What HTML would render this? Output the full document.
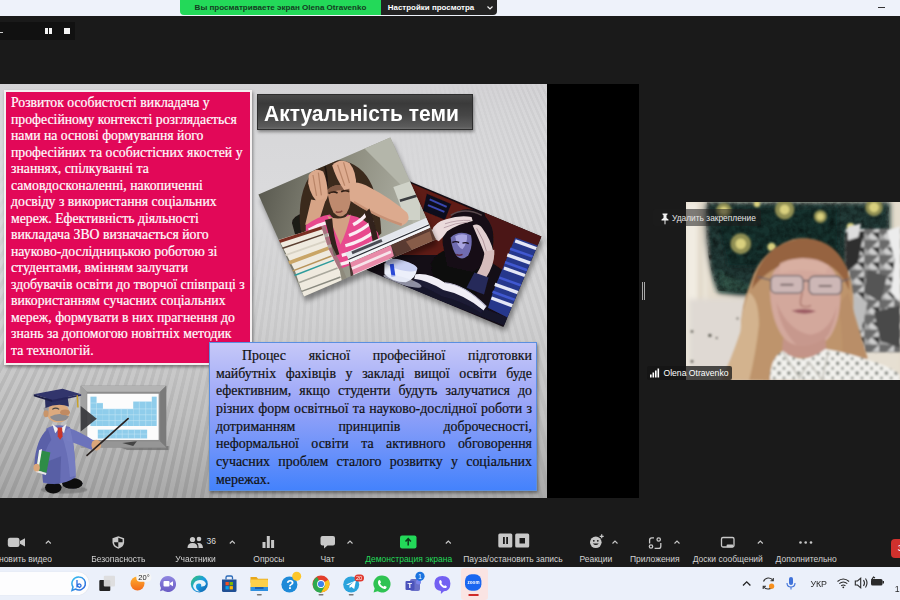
<!DOCTYPE html>
<html lang="uk"><head><meta charset="utf-8"><title>Zoom</title>
<style>
*{box-sizing:border-box;margin:0;padding:0}
html,body{width:900px;height:600px;overflow:hidden;background:#1a1a1a}
body{position:relative;font-family:"Liberation Sans",sans-serif}
.abs{position:absolute}
#topstrip{left:0;top:0;width:900px;height:16px;background:#eef2fa}
#banner{left:180px;top:0;width:201px;height:15px;background:#23d959;border-radius:0 0 0 4px;color:#143d22;font-weight:bold;font-size:8.050px;line-height:15.500px;text-align:center;white-space:nowrap}
#opts{left:381px;top:0;width:116px;height:15px;background:#222;border-radius:0 0 4px 0;color:#fff;font-weight:bold;font-size:7.950px;line-height:15.500px;padding-left:6.800px;white-space:nowrap}
#slide{left:0;top:84px;width:547px;height:414px;background:linear-gradient(180deg,#d4d3d6 0%,#d7d7d9 8%,#dadadc 25%,#d2d2d3 55%,#c2c2c2 80%,#a9a9a9 100%);overflow:hidden}
#swrap{left:0;top:0;width:547px;height:414px;-webkit-mask-image:linear-gradient(177deg,transparent 0,transparent 22px,#000 34px);mask-image:linear-gradient(177deg,transparent 0,transparent 22px,#000 34px)}
#stripes,#stripes2{left:0;top:0;width:547px;height:414px;background:repeating-conic-gradient(from 90deg at 349px -399px,rgba(0,0,0,0) 0deg .28deg,rgba(0,0,0,.035) .34deg .56deg,rgba(0,0,0,0) .62deg);-webkit-mask-image:radial-gradient(ellipse 330px 190px at 200px 30px,transparent 0,transparent 55%,#000 100%);mask-image:radial-gradient(ellipse 330px 190px at 200px 30px,transparent 0,transparent 55%,#000 100%)}
#stripes2{background:repeating-conic-gradient(from 90deg at 349px -399px,rgba(0,0,0,0) 0deg .28deg,rgba(0,0,0,.06) .34deg .56deg,rgba(0,0,0,0) .62deg);-webkit-mask-image:radial-gradient(ellipse 300px 170px at 40px 400px,#000 0,#000 45%,transparent 100%);mask-image:radial-gradient(ellipse 300px 170px at 40px 400px,#000 0,#000 45%,transparent 100%)}
#black{left:547px;top:84px;width:92px;height:414px;background:#000}
#pink{left:4px;top:90px;width:248px;height:275px;background:#e20858;border:2px solid #f4f0f0;color:#fff;font-family:"Liberation Serif",serif;font-size:13.75px;line-height:16.5px;padding:3px 0 0 5px;white-space:nowrap;-webkit-text-stroke:.2px #fff;box-shadow:1px 2px 3px rgba(0,0,0,.4)}
#title{left:257px;top:94px;width:216px;height:36px;background:linear-gradient(180deg,#484848 0%,#3a3a3a 25%,#464646 60%,#5c5c5c 94%,#6e6e6e 100%);border:1px solid #2e2e2e;color:#fff;font-weight:bold;font-size:22.300px;line-height:37px;padding-left:6.300px;white-space:nowrap;box-shadow:1px 2px 3px rgba(0,0,0,.4)}
#title span{display:inline-block;transform:scaleX(.94);transform-origin:0 50%}
#blue{left:209px;top:342px;width:328px;height:149px;background:linear-gradient(180deg,#c6c8f8 0%,#98a4f8 42%,#4482fc 100%);border:1px solid #5b8fe0;font-family:"Liberation Serif",serif;font-size:13.9px;line-height:17.65px;color:#111;padding:4px 0 0 6px;-webkit-text-stroke:.2px #111;box-shadow:1px 2px 3px rgba(0,0,0,.4)}
#blue p{width:316px;text-align:justify;text-align-last:justify;white-space:nowrap}
#blue p.last{text-align-last:left}
#toolbar{left:0;top:498px;width:900px;height:69px;background:#1a1a1a}
#taskbar{left:0;top:566.500px;width:900px;height:33.500px;background:#ebf0fa}
.tl{position:absolute;top:553.700px;font-size:8.5px;line-height:11px;color:#d2d2d2;white-space:nowrap;transform:translateX(-50%)}
</style></head><body>
<div id="topstrip" class="abs"></div>
<div id="banner" class="abs">Вы просматриваете экран Olena Otravenko</div>
<div id="opts" class="abs">Настройки просмотра</div>
<svg class="abs" style="left:486px;top:5px" width="8" height="6" viewBox="0 0 8 6"><path d="M1.500,1.500 l2.500,2.500 2.500,-2.500" stroke="#eee" stroke-width="1.200" fill="none"/></svg>
<div id="slide" class="abs"><div id="swrap" class="abs"><div id="stripes" class="abs"></div><div id="stripes2" class="abs"></div></div></div>
<div id="black" class="abs"></div>
<!--SLIDEGFX-->
<svg id="gfx" class="abs" style="left:0;top:84px" width="547" height="414" viewBox="0 84 547 414">
<defs>
<filter id="z1" x="-10%" y="-10%" width="120%" height="120%"><feGaussianBlur stdDeviation="2.2"/></filter>
<filter id="z0" x="-10%" y="-10%" width="120%" height="120%"><feGaussianBlur stdDeviation="1.3"/></filter>
<filter id="b1" x="-20%" y="-20%" width="140%" height="140%"><feGaussianBlur stdDeviation="1.2"/></filter>
<filter id="b2" x="-20%" y="-20%" width="140%" height="140%"><feGaussianBlur stdDeviation="2.5"/></filter>
<filter id="b3" x="-30%" y="-30%" width="160%" height="160%"><feGaussianBlur stdDeviation="4"/></filter>
<clipPath id="cp1"><polygon points="258.4,194.5 390.3,137.5 435.9,239.4 304,296.4"/></clipPath>
<clipPath id="cp2"><polygon points="403,178.500 541.400,236.400 503.400,327.100 365,269.200"/></clipPath>
<linearGradient id="p1bg" x1="258" y1="194" x2="436" y2="239" gradientUnits="userSpaceOnUse"><stop offset="0" stop-color="#5a5a50"/><stop offset=".45" stop-color="#8e8e80"/><stop offset="1" stop-color="#b9bbb0"/></linearGradient>
</defs>
<!-- photo 2 (dark) -->
<polygon points="405,182.500 543.400,240.400 505.400,331.100 367,273.200" fill="#000" opacity=".4" filter="url(#b2)"/>
<g clip-path="url(#cp2)">
<rect x="360" y="170" width="200" height="170" fill="#140e16"/>
<g transform="translate(360,170) scale(.2832)" filter="url(#z1)">
<polygon points="140,30 400,140 300,300 60,300" fill="#5e1a12"/>
<polygon points="440,150 660,240 600,420 470,330" fill="#4c1712"/>
<polygon points="236,84 322,120 300,176 222,144" fill="#10101c"/>
<path d="M246,104 l60,26 M240,124 l58,24" stroke="#3a46b0" stroke-width="7"/>
<!-- body -->
<path d="M250,330 q30,-60 100,-50 q60,10 80,80 l-20,80 -150,-40z" fill="#0e0a10"/>
<!-- hair -->
<path d="M292,260 q-6,-90 70,-120 q80,-10 106,70 q10,60 -10,110 l-60,40 -90,-20z" fill="#161014"/>
<path d="M320,160 q50,-30 110,0" stroke="#5a4a50" stroke-width="5" fill="none"/>
<!-- face -->
<path d="M320,238 q30,-28 72,-8 q8,38 -10,72 q-20,18 -38,4 q-20,-24 -24,-68z" fill="#6f6cb0"/>
<path d="M336,234 q18,-12 42,-4 q2,26 -16,50 q-20,-8 -26,-46z" fill="#aaa6e2"/>
<path d="M326,256 q12,-6 24,0 M362,258 q12,-4 22,2" stroke="#1a1020" stroke-width="5" fill="none"/>
<path d="M340,298 q10,6 22,0" stroke="#5a2a40" stroke-width="5" fill="none"/>
<path d="M318,236 q30,-34 78,-10 l-4,-26 -60,-6z" fill="#161014"/>
<!-- left hand -->
<path d="M254,214 q10,-30 50,-40 q50,-16 90,-8 l4,14 q-50,10 -90,36 q-16,24 -30,36 q-20,-10 -24,-38z" fill="#eadadc"/>
<path d="M300,190 q40,-14 90,-12 M296,204 q40,-18 86,-20" stroke="#b49aa4" stroke-width="3" fill="none"/>
<!-- right hand & arm -->
<path d="M398,196 q20,-10 34,10 q30,40 40,86 l-30,8 q-20,-50 -44,-104z" fill="#e2cfd0"/>
<path d="M412,206 q26,40 36,86" stroke="#a88c94" stroke-width="3" fill="none"/>
<path d="M440,288 l34,-6 q4,50 -30,100 l-34,-12 q26,-40 30,-82z" fill="#d6bcbc"/>
<path d="M404,362 l50,18 -16,60 -62,-24z" fill="#262a5a"/>
<!-- table -->
<polygon points="30,365 200,400 520,520 525,555" fill="#15132a"/>
<!-- book -->
<path d="M196,368 q50,-6 104,30 q70,6 146,84 l-10,14 q-70,-50 -146,-66 q-50,-30 -100,-42z" fill="#f0eef6"/>
<path d="M300,398 q70,6 146,84" stroke="#b4b2c8" stroke-width="4" fill="none"/>
<path d="M190,384 q50,6 104,40 q70,14 140,70 l-6,12 q-70,-44 -140,-60 q-50,-30 -100,-46z" fill="#1c1a34"/>
<!-- cup -->
<path d="M86,330 q56,-24 116,16 q-4,40 -40,50 q-50,0 -76,-30z" fill="#eceffa"/>
<ellipse cx="146" cy="336" rx="58" ry="18" transform="rotate(14 146 336)" fill="#c9d0f2"/>
<path d="M112,332 l6,44" stroke="#2a49d6" stroke-width="14"/>
<ellipse cx="150" cy="392" rx="70" ry="14" transform="rotate(16 150 392)" fill="#dfe2f2" opacity=".6"/>
<!-- book stack -->
<polygon points="548,238 632,268 560,540 452,486 470,430" fill="#28388c"/>
<g stroke="#e4e7f6" stroke-width="12">
<path d="M548,250 l76,28"/><path d="M520,300 l84,30"/><path d="M508,346 l84,30"/><path d="M476,404 l96,34"/><path d="M464,452 l92,34"/>
</g>
<g stroke="#3f58d0" stroke-width="9">
<path d="M530,278 l80,28"/><path d="M512,326 l84,30"/><path d="M492,380 l90,32"/><path d="M468,430 l94,34"/>
</g>
</g>
</g>
<!-- photo 1 (girl) -->
<polygon points="260.4,199.5 392.3,142.5 437.9,244.4 306,301.400" fill="#000" opacity=".4" filter="url(#b2)"/>
<g clip-path="url(#cp1)">
<rect x="250" y="130" width="200" height="180" fill="url(#p1bg)"/>
<g transform="translate(250,130) scale(.29985)" filter="url(#z1)">
<polygon points="380,60 470,20 620,365 560,390 520,200" fill="#b4b6aa"/>
<polygon points="478,190 567,160 567,300 520,300" fill="#cfd2c8"/>
<path d="M500,236 l67,-20" stroke="#3a3c40" stroke-width="8"/>
<!-- chair -->
<path d="M140,310 q0,-22 40,-34 l20,10 -28,22 6,40 -26,6z" fill="#1f1a18"/>
<!-- hair -->
<path d="M168,330 q-12,-120 40,-190 q40,-50 110,-36 q70,20 96,100 q20,60 24,140 l-60,60 -180,10z" fill="#3a291e"/>
<path d="M250,120 q10,40 6,80" stroke="#1e1410" stroke-width="5" fill="none"/>
<!-- face -->
<path d="M258,200 q30,-30 78,-6 q6,50 -14,84 q-22,22 -44,-4 q-16,-30 -20,-74z" fill="#be8a6e"/>
<path d="M262,212 q14,-10 30,-2 M304,206 q14,-8 28,0" stroke="#2a1a12" stroke-width="6" fill="none"/>
<path d="M286,272 q10,6 22,-2" stroke="#8a4a40" stroke-width="5" fill="none"/>
<path d="M258,200 q30,-30 78,-6 l0,14 q-40,-16 -76,6z" fill="#5a3a2a" opacity=".6"/>
<!-- left hand/arm -->
<path d="M196,150 q20,-28 48,-12 q14,30 16,80 q-6,26 -26,30 q-30,-20 -40,-70z" fill="#dba98c"/>
<path d="M210,150 l12,70 M228,142 l10,76" stroke="#b98568" stroke-width="4" fill="none"/>
<path d="M204,232 q30,8 52,-10 l-30,96 -42,-2z" fill="#d6a486"/>
<!-- right hand/arm -->
<path d="M274,118 q24,-26 58,-8 q24,30 22,80 l-40,10 q-26,-36 -40,-82z" fill="#deac90"/>
<path d="M292,116 l24,70 M312,108 l20,70" stroke="#b98568" stroke-width="4" fill="none"/>
<path d="M330,178 q30,-10 70,14 q70,36 124,84 q16,30 -20,44 q-90,-30 -170,-84z" fill="#dcaa8e"/>
<path d="M346,240 q80,50 160,76" stroke="#b98064" stroke-width="8" fill="none" opacity=".6"/>
<!-- shirt -->
<path d="M186,318 q40,-30 80,-36 q30,40 60,0 q60,10 100,60 l20,70 -200,70 -60,-40z" fill="#e84a8e"/>
<path d="M258,286 q30,60 44,96 q20,-40 34,-100 q-40,24 -78,4z" fill="#d3a084"/>
<g stroke="#fbeef4" stroke-width="11" fill="none">
<path d="M196,334 q30,-18 62,-26"/><path d="M214,368 q30,-16 56,-20"/><path d="M236,398 q20,-10 44,-14"/>
<path d="M344,316 q30,-16 44,-36"/><path d="M330,352 q50,-20 80,-50"/><path d="M318,386 q60,-16 100,-50"/><path d="M306,418 q60,-16 110,-46"/><path d="M300,448 q40,-10 60,-22"/>
</g>
<path d="M250,300 q16,60 30,120 l18,-6 q-20,-60 -24,-120z" fill="#33241a"/>
<path d="M398,262 q24,60 34,130 l-20,6 q-6,-70 -30,-120z" fill="#33241a"/>
<!-- laptop -->
<polygon points="330,440 600,322 640,340 640,420 340,520" fill="#4a3430"/>
<polygon points="334,442 470,384 480,420 350,500" fill="#e88aa8"/>
<path d="M340,462 l130,-56 M346,486 l130,-56" stroke="#f6e4ea" stroke-width="9"/>
<polygon points="470,384 620,318 640,400 500,440" fill="#5a3a30"/>
<polygon points="520,372 600,338 610,372 540,400" fill="#9a6a54" opacity=".7"/>
<polygon points="318,410 590,292 600,326 334,442" fill="#e3e6ec"/>
<polygon points="326,428 596,312 600,326 334,442" fill="#f4f5f8"/>
<path d="M328,432 l270,-116" stroke="#2a2c34" stroke-width="4"/>
<path d="M340,410 l100,-42" stroke="#4a4c55" stroke-width="10"/>
<!-- books -->
<polygon points="96,366 238,322 262,396 300,470 310,520 180,560 150,470" fill="#efeadf"/>
<path d="M98,372 l142,-46" stroke="#7a2e22" stroke-width="10"/>
<path d="M104,396 l140,-48" stroke="#5a3e30" stroke-width="5"/>
<path d="M112,420 l142,-50" stroke="#d8d2c4" stroke-width="6"/>
<path d="M122,446 l140,-52" stroke="#c9a566" stroke-width="12"/>
<path d="M132,474 l140,-54" stroke="#b8945a" stroke-width="5"/>
<path d="M146,486 l134,-52" stroke="#2f9c9c" stroke-width="5"/>
<path d="M156,512 l136,-52" stroke="#a9a79c" stroke-width="5"/>
<path d="M168,540 l134,-50" stroke="#8a8a80" stroke-width="5"/>
<polygon points="238,322 262,396 300,470 310,520 330,512 300,440 270,380 250,318" fill="#8a8578" opacity=".7"/>
</g>
</g>
<!-- board -->
<g transform="translate(0,360) scale(.24444)">
<g filter="url(#z1)">
<polygon points="480,352 690,352 690,368 520,368" fill="#666" opacity=".7"/>
<ellipse cx="262" cy="530" rx="95" ry="16" fill="#6a6a6a" opacity=".55"/>
</g>
<rect x="330" y="105" width="350" height="253" fill="#8c8c8c"/>
<polygon points="330,105 680,105 655,130 355,130" fill="#b4b4b4"/>
<polygon points="680,105 680,358 655,333 655,130" fill="#7a7a7a"/>
<polygon points="330,358 680,358 655,333 355,333" fill="#969696"/>
<polygon points="330,105 355,130 355,333 330,358" fill="#a2a2a2"/>
<rect x="357" y="138" width="292" height="189" fill="#fcfcfc"/>
<g fill="#8fcdeb" filter="url(#z0)">
<rect x="370" y="150" width="25" height="120"/><rect x="395" y="176" width="26" height="94"/>
<rect x="421" y="200" width="124" height="70"/><rect x="545" y="170" width="76" height="100"/><rect x="621" y="150" width="20" height="120"/>
<rect x="400" y="285" width="202" height="36"/>
</g>
<g stroke="#d8eef8" stroke-width="2" opacity=".8">
<path d="M370,176 h50 M370,200 h271 M370,224 h271 M370,248 h271 M400,303 h202"/>
<path d="M446,200 v70 M471,200 v70 M496,200 v70 M521,200 v70 M570,170 v100 M596,170 v100 M425,285 v36 M450,285 v36 M475,285 v36 M500,285 v36 M525,285 v36 M550,285 v36 M575,285 v36"/>
</g>
<polygon points="330,188 330,292 396,240" fill="#38383c" opacity=".92"/>
<polygon points="500,340 560,332 545,352" fill="#444"/>
<!-- professor -->
<g filter="url(#z0)">
<ellipse cx="218" cy="522" rx="34" ry="24" fill="#0a0a0c"/><ellipse cx="296" cy="505" rx="42" ry="22" fill="#0a0a0c"/>
<path d="M190,280 q40,-22 96,-6 q20,60 24,206 q-60,40 -134,22 q-12,-120 14,-222z" fill="#676eb6"/>
<path d="M196,282 q-50,40 -56,150 l30,14 q10,-80 40,-120z" fill="#5a60a8"/>
<path d="M276,276 q50,16 112,56 l-12,36 q-60,-26 -106,-40z" fill="#6c73bb"/>
<path d="M180,420 q-10,40 -4,78 q40,16 70,6 l4,-110z" fill="#4e5498" opacity=".55"/>
<path d="M250,300 q30,80 36,180 l24,-8 q-4,-120 -24,-196z" fill="#7e85c8" opacity=".6"/>
<polygon points="214,262 240,282 226,300" fill="#f0f0f0"/><polygon points="272,262 246,282 262,300" fill="#f0f0f0"/>
<polygon points="236,276 254,276 256,312 246,326 236,312" fill="#c9342a"/>
<polygon points="160,368 206,378 190,462 148,450" fill="#2f8c46"/>
<polygon points="160,368 172,364 158,446 148,450" fill="#f4f4f4"/>
<polygon points="148,450 190,462 188,470 146,458" fill="#e8e8e8"/>
<ellipse cx="150" cy="440" rx="13" ry="16" fill="#dba679"/>
<ellipse cx="394" cy="348" rx="20" ry="22" fill="#dba679"/>
<path d="M356,390 L524,240" stroke="#2a2220" stroke-width="7" stroke-linecap="round"/>
<ellipse cx="238" cy="216" rx="46" ry="40" fill="#dcaa7e"/>
<path d="M178,196 q10,-10 22,-4 l-4,40 q-14,-4 -18,-36z" fill="#9a9a9e"/>
<ellipse cx="188" cy="220" rx="10" ry="14" fill="#c9956a"/>
<path d="M204,232 q36,-22 78,-2 q-6,20 -38,20 q-30,0 -40,-18z" fill="#8c8c90"/>
<ellipse cx="266" cy="214" rx="20" ry="12" fill="#c08a62"/>
<path d="M214,202 q14,-10 28,0" stroke="#444" stroke-width="5" fill="none"/>
<path d="M184,156 l92,-10 6,44 q-46,-16 -96,6z" fill="#2b2e5e"/>
<polygon points="138,140 256,118 332,140 214,164" fill="#31346c"/>
<polygon points="138,140 214,164 214,172 138,148" fill="#1c1e46"/>
<polygon points="214,164 332,140 332,146 214,172" fill="#25285a"/>
<path d="M316,144 l3,50" stroke="#c9a227" stroke-width="6"/>
</g>
</g>
</svg>
<!--/SLIDEGFX-->
<div id="pink" class="abs">Розвиток особистості викладача у<br>професійному контексті розглядається<br>нами на основі формування його<br>професійних та особистісних якостей у<br>знаннях, спілкуванні та<br>самовдосконаленні, накопиченні<br>досвіду з використання соціальних<br>мереж. Ефективність діяльності<br>викладача ЗВО визначається його<br>науково-дослідницькою роботою зі<br>студентами, вмінням залучати<br>здобувачів освіти до творчої співпраці з<br>використанням сучасних соціальних<br>мереж, формувати в них прагнення до<br>знань за допомогою новітніх методик<br>та технологій.</div>
<div id="title" class="abs"><span>Актуальність теми</span></div>
<div id="blue" class="abs"><p style="padding-left:26px;white-space:normal">Процес якісної професійної підготовки</p><p style="white-space:normal">майбутніх фахівців у закладі вищої освіти буде</p><p style="white-space:normal">ефективним, якщо студенти будуть залучатися до</p><p style="white-space:normal">різних форм освітньої та науково-дослідної роботи з</p><p style="white-space:normal">дотриманням принципів доброчесності,</p><p style="white-space:normal">неформальної освіти та активного обговорення</p><p style="white-space:normal">сучасних проблем сталого розвитку у соціальних</p><p class="last">мережах.</p></div>
<!--VIDEO-->
<svg id="vid" class="abs" style="left:686px;top:202px" width="214" height="178" viewBox="686 202 214 178">
<defs>
<filter id="vb1" x="-20%" y="-20%" width="140%" height="140%"><feGaussianBlur stdDeviation="1.5"/></filter>
<filter id="vb2" x="-20%" y="-20%" width="140%" height="140%"><feGaussianBlur stdDeviation="3"/></filter>
<clipPath id="vcp"><rect x="686" y="202" width="214" height="178"/></clipPath>
<pattern id="dots" width="9" height="9" patternUnits="userSpaceOnUse"><circle cx="3" cy="3" r="1.6" fill="#7a7f78"/><circle cx="7.5" cy="7.5" r="1.2" fill="#8a8f88"/></pattern>
<pattern id="geo" width="14" height="14" patternUnits="userSpaceOnUse"><rect width="14" height="14" fill="#d8d8d8"/><polygon points="0,0 14,0 0,14" fill="#555"/><polygon points="7,7 14,7 14,14" fill="#222"/><polygon points="0,7 7,14 0,14" fill="#999"/></pattern>
<clipPath id="paintclip"><path d="M206,22 h560 v86 l-130,10 v120 q-60,56 -170,56 q-120,18 -226,0 q-48,-118 -34,-272z"/></clipPath>
<filter id="vnoise" x="0" y="0" width="100%" height="100%"><feTurbulence type="fractalNoise" baseFrequency=".05" numOctaves="3" seed="7"/><feColorMatrix type="matrix" values="0 0 0 0 0  0 0 0 0 0  0 0 0 0 0  .9 .9 .9 0 -1.050"/></filter>
<filter id="vz1" x="-10%" y="-10%" width="120%" height="120%"><feGaussianBlur stdDeviation="3.5"/></filter>
<filter id="vz2" x="-10%" y="-10%" width="120%" height="120%"><feGaussianBlur stdDeviation="8"/></filter>
<pattern id="dots2" width="30" height="30" patternUnits="userSpaceOnUse"><circle cx="8" cy="8" r="5.500" fill="#6e736c"/><circle cx="23" cy="23" r="4.500" fill="#7c817a"/></pattern>
<pattern id="geo2" width="46" height="46" patternUnits="userSpaceOnUse"><rect width="46" height="46" fill="#cfcfcf"/><polygon points="0,0 46,0 0,46" fill="#6a6a6a"/><polygon points="23,23 46,23 46,46" fill="#2a2a2a"/><polygon points="0,23 23,46 0,46" fill="#a5a5a5"/></pattern>
</defs>
<g clip-path="url(#vcp)">
<rect x="686" y="202" width="214" height="178" fill="#e4dccd"/>
<g transform="translate(640,195) scale(.325)">
<g filter="url(#vz2)">
<rect x="140" y="22" width="62" height="546" fill="#f1ece2"/>
<rect x="182" y="22" width="8" height="546" fill="#cdbfa8"/>
<path d="M200,22 h570 v90 l-130,10 v120 q-60,60 -170,60 q-120,20 -230,0 q-50,-120 -40,-280z" fill="#213b37"/>
<path d="M230,40 h380 v180 h-340z" fill="#19302f"/>
<path d="M240,230 q60,40 120,60 l-110,10z" fill="#335548"/>
<rect x="150" y="320" width="180" height="250" fill="#dfd9d3"/>
<rect x="640" y="430" width="160" height="140" fill="#e6dfd2"/>
</g>
<g clip-path="url(#paintclip)"><rect x="140" y="22" width="660" height="300" filter="url(#vnoise)" opacity=".55"/></g>
<g filter="url(#vz1)">
<g fill="#8f8e52"><circle cx="258" cy="48" r="24"/><circle cx="310" cy="150" r="32"/><circle cx="445" cy="45" r="30"/><circle cx="555" cy="66" r="20"/><circle cx="720" cy="38" r="27"/></g>
<g fill="#d9d07e"><circle cx="258" cy="48" r="12"/><circle cx="310" cy="150" r="16"/><circle cx="445" cy="45" r="15"/><circle cx="555" cy="66" r="11"/><circle cx="720" cy="38" r="15"/><circle cx="405" cy="160" r="13"/><circle cx="360" cy="28" r="10"/><circle cx="648" cy="98" r="12"/></g>
<rect x="632" y="104" width="170" height="380" fill="url(#geo2)"/>
<polygon points="760,110 800,96 800,330 772,300 784,200" fill="#ececec"/>
<polygon points="632,120 690,110 670,210 632,240" fill="#2e2e2e"/>
<polygon points="700,230 760,250 740,330 690,300" fill="#555"/>
<polygon points="650,300 700,330 680,420 640,400" fill="#bdbdbd"/>
<polygon points="720,360 800,340 800,470 740,450" fill="#4a4a4a"/>
<polygon points="640,98 680,88 672,130 640,140" fill="#dedede"/>
<g fill="#5a5850"><circle cx="215" cy="432" r="5"/><circle cx="160" cy="420" r="4"/><circle cx="160" cy="512" r="4"/><circle cx="236" cy="440" r="3"/><circle cx="300" cy="380" r="3"/></g>
</g>
<g filter="url(#vz1)">
<!-- hair -->
<path d="M250,570 q30,-60 60,-150 q0,-80 30,-150 q30,-100 130,-134 q90,-16 150,60 q40,60 36,150 q10,120 40,170 l10,60z" fill="#be946c"/>
<path d="M250,570 q30,-60 60,-150 q0,-60 26,-120 q30,20 30,100 q-10,90 -30,170z" fill="#d3b38e"/>
<path d="M640,300 q30,100 60,200 l-10,70 h-70 q10,-120 -10,-230z" fill="#b98e68"/>
<path d="M344,290 q20,-130 146,-156 q110,-6 150,100 l4,60 q-40,-100 -140,-92 q-100,6 -160,88z" fill="#96633f"/>
<!-- face -->
<path d="M400,270 q10,-70 100,-76 q100,0 116,90 q6,90 -30,150 q-40,50 -90,44 q-60,-20 -84,-100 q-14,-50 -12,-108z" fill="#d3a89c"/>
<path d="M420,330 q10,80 60,130 q50,30 100,-30 q20,-40 26,-90 q-20,80 -80,90 q-70,-10 -106,-100z" fill="#c08d84" opacity=".6"/>
<path d="M430,210 q60,-30 150,6 l-10,26 q-70,-20 -140,-2z" fill="#d9b0a2" opacity=".8"/>
<rect x="402" y="248" width="100" height="54" rx="16" fill="#cdb7b6" stroke="#6d6468" stroke-width="4"/>
<rect x="520" y="250" width="100" height="56" rx="16" fill="#cdb7b6" stroke="#6d6468" stroke-width="4"/>
<path d="M502,266 q9,-6 18,0 M402,262 l-40,-10 M620,266 l24,-8" stroke="#6d6468" stroke-width="4" fill="none"/>
<path d="M432,276 h40 M550,280 h40" stroke="#5a4a4c" stroke-width="6" opacity=".7"/>
<path d="M500,300 q-10,30 -4,40 q14,8 30,0" stroke="#b07e74" stroke-width="5" fill="none"/>
<path d="M466,356 q40,-12 76,2 q-36,16 -76,-2z" fill="#9c5c64"/>
<path d="M440,440 q60,50 130,0 l6,60 h-140z" fill="#c49488"/>
<!-- shirt -->
<path d="M400,570 q0,-70 40,-90 q60,50 130,-6 q70,10 150,40 q50,14 80,40 v20z" fill="#f3f2ee"/>
<path d="M400,570 q0,-70 40,-90 q60,50 130,-6 q70,10 150,40 q50,14 80,40 v20z" fill="url(#dots2)"/>
<path d="M440,484 l50,80 30,-50 40,56 20,-90" stroke="#c9c7c0" stroke-width="5" fill="none"/>
</g>
</g>
</g>
</svg>
<div class="abs" style="left:653px;top:209.300px;width:108px;height:17px;background:rgba(30,30,30,.55);border-radius:3px"></div>
<svg class="abs" style="left:659.500px;top:212.500px" width="10" height="12" viewBox="0 0 10 12"><path d="M2.5,0.5h5v1l-1,.8v2.7l2,1.6v1h-3v3.2l-.5,1-.5-1v-3.200h-3v-1l2,-1.600v-2.700l-1,-.8z" fill="#f2f2f2"/></svg>
<div class="abs" style="left:672px;top:212.800px;font-size:8.400px;line-height:11px;color:#e6e6e6;white-space:nowrap">Удалить закрепление</div>
<div class="abs" style="left:647px;top:366px;width:85px;height:14px;background:rgba(20,20,20,.75);border-radius:2px"></div>
<svg class="abs" style="left:650px;top:368px" width="10" height="10" viewBox="0 0 10 10"><g fill="#fff"><rect x="0" y="6.500" width="1.600" height="3"/><rect x="2.500" y="4.500" width="1.600" height="5"/><rect x="5" y="2.500" width="1.600" height="7"/><rect x="7.500" y=".5" width="1.600" height="9"/></g></svg>
<div class="abs" style="left:663.500px;top:368px;font-size:8.600px;line-height:10px;color:#fff;white-space:nowrap">Olena Otravenko</div>
<div class="abs" style="left:642.200px;top:281.500px;width:1px;height:18px;background:#a8a8a8"></div>
<div class="abs" style="left:644.400px;top:281.500px;width:1px;height:18px;background:#a8a8a8"></div>
<!--/VIDEO-->
<div id="toolbar" class="abs"></div>
<!--TOOL-->
<div class="abs" style="left:0;top:22px;width:74.500px;height:17.600px;background:#111"></div>
<div class="abs" style="left:0;top:31.500px;width:3px;height:1px;background:#ccc"></div>
<div class="abs" style="left:45px;top:28px;width:2.800px;height:6px;background:#f4f4f4"></div>
<div class="abs" style="left:49.200px;top:28px;width:2.800px;height:6px;background:#f4f4f4"></div>
<div class="abs" style="left:64px;top:28px;width:6px;height:6px;background:#f4f4f4"></div>
<div class="abs" style="left:878px;top:7px;width:7px;height:1px;background:#333"></div>
<svg class="abs" style="left:0;top:530px" width="900" height="22" viewBox="0 530 900 22">
<g fill="#c8c8c8" stroke="none">
<!-- camera -->
<rect x="7.800" y="537.700" width="11.700" height="9.300" rx="2.200"/><polygon points="20,541 25,538.300 25,546.400 20,543.700"/>
<!-- shield -->
<path d="M118.300,536.200 l5.800,2.100 v4 q0,4.500 -5.800,6.500 q-5.800,-2 -5.800,-6.500 v-4z"/>
<!-- participants -->
<circle cx="192.500" cy="539.500" r="2.600"/><path d="M187.500,548 q0,-5 5,-5 q5,0 5,5z"/>
<circle cx="199" cy="539" r="2.300"/><path d="M198.500,548 v-1.500 q0,-2.200 -1.500,-3.200 q5.500,-1.200 6,4.700z"/>
<!-- polls -->
<rect x="262.500" y="542" width="3" height="6"/><rect x="266.800" y="536" width="3" height="12"/><rect x="271.100" y="540" width="3" height="8"/>
<!-- chat -->
<path d="M322.500,536 h10.500 q2,0 2,2 v5.500 q0,2 -2,2 h-5.500 l-3.500,3 v-3 h-1.500 q-2,0 -2,-2 v-5.500 q0,-2 2,-2z"/>
<!-- record pause/stop -->
<rect x="498.300" y="533.500" width="14" height="14" rx="1.500"/><rect x="515.200" y="533.500" width="14" height="14" rx="1.500"/>
<!-- smiley -->
<circle cx="595.800" cy="542.300" r="5.800"/>
<path d="M601.700,534.300 v4 M599.700,536.300 h4" stroke="#c8c8c8" stroke-width="1.200"/>
<!-- dots -->
<circle cx="800.500" cy="542.500" r="1.300"/><circle cx="805.700" cy="542.500" r="1.300"/><circle cx="811" cy="542.500" r="1.300"/>
</g>
<g fill="#1a1a1a">
<path d="M118.300,537.800 v9.500 q-4.300,-1.800 -4.300,-5.100 h4.300z M118.300,542.200 h4.300 v-2.900 l-4.300,-1.500z"/>
<rect x="503" y="537" width="1.800" height="7"/><rect x="506.200" y="537" width="1.800" height="7"/><rect x="519.500" y="538" width="5.500" height="5.500"/>
<circle cx="593.800" cy="540.800" r=".9"/><circle cx="597.800" cy="540.800" r=".9"/><path d="M592.800,543.500 q3,3 6,0z"/>
</g>
<!-- share -->
<rect x="400" y="535.500" width="16.500" height="13" rx="2" fill="#23d959"/>
<path d="M408.200,545.500 v-6.500 M405.500,541.500 l2.700,-2.800 2.700,2.800" stroke="#0e3a1c" stroke-width="1.500" fill="none"/>
<!-- apps -->
<g stroke="#c8c8c8" stroke-width="1.300" fill="none">
<path d="M654,537.800 h-2.200 q-2.200,0 -2.200,2.200 v3.500 M660.800,543 v3.200 q0,2.200 -2.200,2.200 h-4"/>
<circle cx="658.700" cy="539.500" r="1.700"/><circle cx="651" cy="546.500" r="1.700"/>
<!-- whiteboard -->
<rect x="721.500" y="537.500" width="12.500" height="9.500" rx="1.500"/>
</g>
<rect x="726.500" y="544.500" width="7" height="2.800" rx="1.200" fill="#c8c8c8"/>
<!-- carets -->
<g stroke="#c8c8c8" stroke-width="1.100" fill="none">
<path d="M45.800,543.500 l2.500,-2.500 2.500,2.500"/><path d="M229.800,543.500 l2.500,-2.500 2.500,2.500"/><path d="M347.500,543.500 l2.500,-2.500 2.500,2.500"/><path d="M445.800,543.500 l2.500,-2.500 2.500,2.500"/><path d="M612.500,543.500 l2.500,-2.500 2.500,2.500"/><path d="M674.500,543.500 l2.500,-2.500 2.500,2.500"/><path d="M757.800,543.500 l2.500,-2.500 2.500,2.500"/>
</g>
<text x="206.500" y="544" font-family="Liberation Sans, sans-serif" font-size="8.500" fill="#ddd">36</text>
</svg>
<div class="tl" style="left:0;transform:none;width:52px;direction:rtl;overflow:hidden"><span style="unicode-bidi:bidi-override;direction:ltr;white-space:nowrap">Остановить видео</span></div>
<div class="tl" style="left:118.300px">Безопасность</div>
<div class="tl" style="left:195.500px">Участники</div>
<div class="tl" style="left:268.800px">Опросы</div>
<div class="tl" style="left:327.500px">Чат</div>
<div class="tl" style="left:408.700px;color:#23d959">Демонстрация экрана</div>
<div class="tl" style="left:513px">Пауза/остановить запись</div>
<div class="tl" style="left:595.800px">Реакции</div>
<div class="tl" style="left:654.800px">Приложения</div>
<div class="tl" style="left:727.800px">Доски сообщений</div>
<div class="tl" style="left:806.200px">Дополнительно</div>
<div class="abs" style="left:890.500px;top:539.300px;width:14px;height:18.600px;background:#d0312d;border-radius:4px;color:#fff;font-size:9px;line-height:18.600px;padding-left:7.300px">З</div>
<!--/TOOL-->
<div id="taskbar" class="abs"></div>
<!--TASK-->
<div class="abs" style="left:-20px;top:572px;width:109px;height:23px;background:#fdfdfe;border-radius:12px;box-shadow:0 0 1px rgba(0,0,0,.15)"></div>
<div class="abs" style="left:460.500px;top:568px;width:27px;height:32px;background:#fae4e3;border-radius:3px"></div>
<svg class="abs" style="left:0;top:567px" width="900" height="33" viewBox="0 567 900 33">
<defs>
<linearGradient id="gbing" x1="0" y1="0" x2="1" y2="1"><stop offset="0" stop-color="#35c1f1"/><stop offset="1" stop-color="#2b5fd9"/></linearGradient>
<linearGradient id="gor" x1="0" y1="0" x2="0" y2="1"><stop offset="0" stop-color="#ffb02e"/><stop offset="1" stop-color="#f26a1b"/></linearGradient>
<linearGradient id="gedge" x1="0" y1="0" x2="1" y2="1"><stop offset="0" stop-color="#35c56a"/><stop offset=".5" stop-color="#1b9de2"/><stop offset="1" stop-color="#0c59a4"/></linearGradient>
<linearGradient id="gpurp" x1="0" y1="0" x2="0" y2="1"><stop offset="0" stop-color="#8f86e0"/><stop offset="1" stop-color="#6a5cc4"/></linearGradient>
</defs>
<!-- bing -->
<path d="M79,577 a6.500,6.500 0 1 1 -3.500,12 l-3.500,1.500 1,-3.500 a6.500,6.500 0 0 1 6,-10z" fill="none" stroke="url(#gbing)" stroke-width="1.500"/>
<path d="M77,580 v7.500 M77,585.500 q1.500,-2.500 3.500,-1 q1.500,1.800 -1,3 z" stroke="#2b6fe0" stroke-width="1.300" fill="none"/>
<!-- task view -->
<rect x="99.300" y="580" width="11" height="11" rx="1" fill="#222"/>
<rect x="103.800" y="575.800" width="11.200" height="10.800" rx="1" fill="#dcdcdc" opacity=".92"/>
<!-- weather -->
<circle cx="137.500" cy="583.500" r="7" fill="url(#gor)"/>
<rect x="136.300" y="573.300" width="15" height="8.500" rx="4" fill="#f6f6f6"/>
<text x="138.300" y="580.300" font-family="Liberation Sans, sans-serif" font-size="7.500" fill="#222">20°</text>
<!-- purple chat -->
<path d="M168,576 a8,8 0 1 1 -5,14.200 l-3,1 1,-3.200 a8,8 0 0 1 7,-12z" fill="url(#gpurp)"/>
<rect x="163.500" y="581" width="6" height="5.500" rx="1" fill="#fff"/><polygon points="170,583 173,581.300 173,586.200 170,584.500" fill="#fff"/>
<!-- edge -->
<circle cx="199.300" cy="584" r="8.500" fill="url(#gedge)"/>
<path d="M193,586 q1,-6 7,-6 q5,0 6,4 q-1,3 -5,2.500 q1,-3 -2,-3 q-3,0 -3,3 q0,3 4,5 q-6,0 -7,-5.500z" fill="#e8f4fb"/>
<!-- store -->
<path d="M222,579.500 h14.500 v11 q0,1.500 -1.500,1.500 h-11.500 q-1.500,0 -1.500,-1.500z" fill="#1f4f94"/>
<path d="M226,579.500 v-2 q0,-1.500 1.500,-1.500 h3.500 q1.500,0 1.500,1.500 v2" stroke="#2a69b8" stroke-width="1.300" fill="none"/>
<rect x="225.500" y="582" width="3.300" height="3.300" fill="#f25022"/><rect x="229.600" y="582" width="3.300" height="3.300" fill="#7fba00"/><rect x="225.500" y="586.100" width="3.300" height="3.300" fill="#00a4ef"/><rect x="229.600" y="586.100" width="3.300" height="3.300" fill="#ffb900"/>
<!-- explorer -->
<path d="M250.500,577 h6 l1.500,1.800 h10 v4 h-17.500z" fill="#e8a81c"/>
<rect x="250.500" y="579.500" width="17.500" height="11.500" rx="1" fill="#fcd04a"/>
<rect x="250.500" y="587" width="17.500" height="4" fill="#2d8fe0"/><rect x="255" y="587" width="8.500" height="2" fill="#1a5fb0"/>
<rect x="256.800" y="594" width="5" height="1.500" rx=".7" fill="#777"/>
<!-- help -->
<circle cx="289.400" cy="584.500" r="8" fill="#1e8ad8"/>
<text x="286.300" y="589.300" font-family="Liberation Sans, sans-serif" font-weight="bold" font-size="13" fill="#fff">?</text>
<circle cx="296.700" cy="576.300" r="4.500" fill="#fcc62a"/>
<!-- chrome -->
<circle cx="321" cy="584" r="8.500" fill="#e33e2b"/>
<path d="M321,584 L313.640,588.250 A8.500,8.500 0 0 0 321,592.500 L325.250,585.500z M313.640,588.250 L321,584 l-4,-7 a8.500,8.500 0 0 0 -3.360,11.250z" fill="#2da94f"/>
<path d="M321,584 L328.360,579.750 A8.500,8.500 0 0 1 321,592.500 L325.250,585z" fill="#fcc31e"/>
<path d="M313.640,588.250 A8.500,8.500 0 0 0 321,592.500 l4.250,-7.360 -8.500,0z" fill="#2da94f"/>
<circle cx="321" cy="584" r="3.900" fill="#fff"/><circle cx="321" cy="584" r="3.100" fill="#3f83ec"/>
<rect x="318.500" y="594" width="5" height="1.500" rx=".7" fill="#777"/>
<!-- telegram -->
<circle cx="351.200" cy="584.500" r="8" fill="#2aa3dc"/>
<path d="M346,584.500 l10,-4 -1.800,8.500 -3,-2.200 -1.500,1.500 -.3,-2.500 4.500,-4 -5.500,3.300z" fill="#fff"/>
<rect x="354.500" y="574.500" width="9.500" height="7" rx="3.500" fill="#e0392f"/>
<text x="356" y="580.200" font-family="Liberation Sans, sans-serif" font-size="5.500" fill="#fff">20</text>
<rect x="348.700" y="594" width="5" height="1.500" rx=".7" fill="#777"/>
<!-- whatsapp -->
<path d="M382,575.500 a8.500,8.500 0 1 1 -4.300,15.800 l-4.200,1.200 1.200,-4 a8.500,8.500 0 0 1 7.300,-13z" fill="#2fc352"/>
<path d="M378.500,580.500 q1.200,-1.200 2,.5 l.5,1.500 -1,1 q1.200,2.300 3.500,3.300 l1,-1 2,1 q.5,1 -.8,2 q-2.500,1 -5.800,-2.200 q-3,-3.500 -1.400,-6.100z" fill="#fff"/>
<!-- teams -->
<rect x="410" y="579" width="10" height="12" rx="2" fill="#6a70c8"/>
<circle cx="418.500" cy="582" r="2.500" fill="#7b83eb"/>
<rect x="405.500" y="581" width="9" height="9" rx="1" fill="#4b53bc"/>
<text x="407.600" y="588.200" font-family="Liberation Sans, sans-serif" font-weight="bold" font-size="7.500" fill="#fff">T</text>
<circle cx="420" cy="576.300" r="4.600" fill="#1a73e0"/>
<text x="418.300" y="579" font-family="Liberation Sans, sans-serif" font-size="6.500" fill="#fff">1</text>
<!-- viber -->
<path d="M442.400,576 q8,0 8,7.500 q0,7.500 -6.500,7.800 l-3,2.700 v-2.900 q-6.500,-.8 -6.500,-7.600 q0,-7.500 8,-7.500z" fill="#7360f2"/>
<path d="M439.500,580.500 q1,-1 1.800,.3 l.7,1.400 -.8,.9 q1,2 3,3 l.9,-.8 1.600,.9 q.6,.9 -.6,1.700 q-2.200,.8 -5,-2 q-2.800,-3 -1.600,-5.400z" fill="#fff"/>
<!-- zoom -->
<rect x="465" y="574.300" width="16.400" height="16.400" rx="6.500" fill="#1a66f0"/>
<text x="467.500" y="584" font-family="Liberation Sans, sans-serif" font-weight="bold" font-size="4.600" fill="#fff">zoom</text>
<rect x="468.300" y="594" width="10.500" height="2" rx="1" fill="#cf2a2a"/>
<!-- tray -->
<path d="M743,585.500 l3.700,-3.700 3.700,3.700" stroke="#222" stroke-width="1.300" fill="none"/>
<path d="M763.500,581.500 a5.300,5.300 0 0 1 9.500,-1 m.3,-2.500 v2.800 h-2.800 M773,585.500 a5.300,5.300 0 0 1 -9.500,1 m-.3,2.500 v-2.800 h2.800" stroke="#333" stroke-width="1.100" fill="none"/>
<circle cx="771.600" cy="586.200" r="2.600" fill="#f7901e"/>
<rect x="789" y="577" width="4" height="8" rx="2" fill="#3f72d9"/>
<path d="M787,583 q0,4 4,4 q4,0 4,-4 M791,587 v2.500" stroke="#3f72d9" stroke-width="1.100" fill="none"/>
<text x="810.400" y="587" font-family="Liberation Sans, sans-serif" font-size="8.800" fill="#2a2a2a">УКР</text>
<g stroke="#2a2a2a" stroke-width="1.100" fill="none">
<path d="M837.500,581.500 q5.800,-5 11.600,0 M839.300,583.700 q4,-3.400 8,0 M841.200,585.800 q2.100,-1.700 4.200,0"/>
<path d="M863.500,580 q2,3 0,6 M865.500,578.500 q3,4.500 0,9"/>
<path d="M855.300,581 h2.200 l3.200,-2.800 v9.600 l-3.200,-2.800 h-2.200z"/>
</g>
<circle cx="843.300" cy="587.300" r=".9" fill="#2a2a2a"/>
<rect x="871" y="579" width="11.500" height="6.500" rx="1.500" fill="#2a2a2a"/><rect x="882.500" y="581" width="1.500" height="2.500" fill="#2a2a2a"/>
<path d="M871.500,580 l2,-3 1.500,1" stroke="#2a2a2a" stroke-width="1.200" fill="none"/>
<text x="894.800" y="592" font-family="Liberation Sans, sans-serif" font-size="8.800" fill="#2a2a2a">10:</text>
</svg>
<!--/TASK-->
</body></html>
